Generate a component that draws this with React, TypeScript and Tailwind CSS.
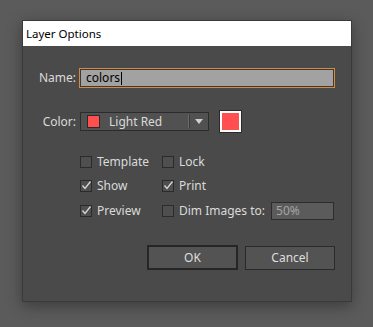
import React from "react";

const font = { fontFamily: '"Noto Sans", "Open Sans", Arial, sans-serif' };

function Check({ checked }: { checked?: boolean }) {
  return (
    <div className="w-[12px] h-[12px] border border-[#2b2b2b] bg-[#4f4f4f] relative shrink-0">
      {checked && (
        <svg className="absolute left-[0px] top-[-1px]" width="11" height="11" viewBox="0 0 11 11">
          <path d="M1.5 5.5 L4 8.5 L9.5 1.5" fill="none" stroke="#d8d8d8" strokeWidth="1.3" />
        </svg>
      )}
    </div>
  );
}

function CB({ label, checked, w }: { label: string; checked?: boolean; w: string }) {
  return (
    <div className={`flex items-center gap-[5px] ${w}`}>
      <Check checked={checked} />
      <span className="text-[12px] text-[#dadada] leading-none">{label}</span>
    </div>
  );
}

export default function App() {
  return (
    <div className="w-[373px] h-[327px] bg-[#5b5b5b] pt-[20px] pl-[22px] overflow-hidden" style={font}>
      <div className="w-[330px] h-[282px] border border-[#3a3a3a] flex flex-col shadow-[0_4px_14px_rgba(0,0,0,0.35)]">
        <div className="h-[25px] bg-white text-black text-[11.5px] pl-[3px] flex items-center shrink-0">
          Layer Options
        </div>
        <div className="flex-1 bg-[#4a4a4a] flex flex-col">
          {/* Name row */}
          <div className="flex items-center mt-[22px] h-[20px]">
            <span className="w-[53px] text-right text-[12px] text-[#dadada]">Name:</span>
            <div className="ml-[3px] w-[256px] h-[20px] border border-[#d48a3a] bg-[#a2a2a2] shadow-[inset_0_0_0_1px_#3a3a3a] flex items-center pl-[6px]">
              <span className="text-[12px] text-black">colors</span>
              <span className="w-[1px] h-[13px] bg-black ml-[1px]" />
            </div>
          </div>
          {/* Color row */}
          <div className="flex items-center mt-[23px] h-[21px]">
            <span className="w-[53px] text-right text-[12px] text-[#dadada]">Color:</span>
            <div className="ml-[4px] w-[129px] h-[19px] border border-[#2c2c2c] bg-[#515151] flex items-center">
              <div className="ml-[6px] w-[13px] h-[13px] border border-[#2a2a2a] bg-[#ff4f4f]" />
              <span className="ml-[9px] text-[12px] text-[#dadada] flex-1">Light Red</span>
              <div className="w-[1px] h-[13px] bg-[#6a6a6a]" />
              <div className="w-[1px] h-[13px] bg-[#3a3a3a]" />
              <svg className="mx-[5px]" width="8" height="5" viewBox="0 0 8 5">
                <path d="M0 0 H8 L4 5 Z" fill="#d0d0d0" />
              </svg>
            </div>
            <div className="ml-[11px] w-[21px] h-[21px] border-2 border-white bg-[#ff4f4f] outline outline-1 outline-[#2a2a2a]" />
          </div>
          {/* Checkbox grid */}
          <div className="flex flex-col pl-[57px] mt-[23px]">
            <div className="flex items-center h-[14px]">
              <CB label="Template" w="w-[82px]" />
              <CB label="Lock" w="w-[82px]" />
            </div>
            <div className="flex items-center h-[14px] mt-[10px]">
              <CB label="Show" checked w="w-[82px]" />
              <CB label="Print" checked w="w-[82px]" />
            </div>
            <div className="flex items-center h-[18px] mt-[9px]">
              <CB label="Preview" checked w="w-[82px]" />
              <CB label="Dim Images to:" w="w-auto" />
              <div className="ml-[6px] w-[63px] h-[18px] border border-[#2c2c2c] bg-[#5b5b5b] flex items-center pl-[4px]">
                <span className="text-[12px] text-[#a5a5a5]">50%</span>
              </div>
            </div>
          </div>
          {/* Buttons */}
          <div className="flex items-center mt-[25px] pl-[124px]">
            <button className="w-[91px] h-[25px] border-2 border-[#262626] bg-[#535353] text-[12px] text-[#dedede]">
              OK
            </button>
            <button className="ml-[7px] w-[90px] h-[24px] border border-[#2a2a2a] bg-[#535353] text-[12px] text-[#dedede]">
              Cancel
            </button>
          </div>
        </div>
      </div>
    </div>
  );
}
